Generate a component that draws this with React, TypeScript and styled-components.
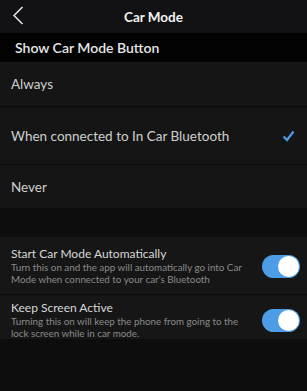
import { createGlobalStyle } from 'styled-components'
import styled from 'styled-components'

const GlobalStyle = createGlobalStyle`
  html, body {
    margin: 0;
    padding: 0;
    background: #0d0d0e;
  }
  body {
    font-family: Lato, 'Noto Sans', sans-serif;
    -webkit-font-smoothing: antialiased;
  }
`

const options = ['Always', 'When connected to In Car Bluetooth', 'Never']
const selected = 1

const toggles = [
  {
    title: 'Start Car Mode Automatically',
    text: 'Turn this on and the app will automatically go into Car Mode when connected to your car\u2019s Bluetooth',
    top: 10,
    bottom: 9,
  },
  {
    title: 'Keep Screen Active',
    text: 'Turning this on will keep the phone from going to the lock screen while in car mode.',
    top: 6,
    bottom: 0,
  },
]

const App = () => {
  return (
    <Screen>
      <GlobalStyle />
      <Header>
        <BackButton type='button' aria-label='Back'>
          <svg width='12' height='19' viewBox='0 0 12 19' fill='none'>
            <path d='M10.5 1L2 9.5L10.5 18' stroke='#e8e8e8' strokeWidth='1.5' />
          </svg>
        </BackButton>
        <Title>Car Mode</Title>
      </Header>
      <SectionTitle>Show Car Mode Button</SectionTitle>
      <OptionList>
        {options.map((label, i) => (
          <Option key={label} $tall={i === 1}>
            <span>{label}</span>
            {i === selected && (
              <svg width='13' height='12' viewBox='0 0 13 12' fill='none'>
                <path d='M1.5 6.5L5 10L11.5 1.5' stroke='#4d9be0' strokeWidth='2.2' />
              </svg>
            )}
          </Option>
        ))}
      </OptionList>
      <Gap />
      <ToggleList>
        {toggles.map((t) => (
          <ToggleRow key={t.title} $top={t.top} $bottom={t.bottom}>
            <ToggleText>
              <ToggleTitle>{t.title}</ToggleTitle>
              <ToggleDesc>{t.text}</ToggleDesc>
            </ToggleText>
            <Switch>
              <Knob />
            </Switch>
          </ToggleRow>
        ))}
      </ToggleList>
    </Screen>
  )
}

export default App

const Screen = styled.div`
  width: 307px;
  height: 391px;
  overflow: hidden;
  background: #0d0d0e;
  color: #d6d6d6;
`

const Header = styled.div`
  position: relative;
  height: 33px;
  display: flex;
  align-items: center;
  justify-content: center;
  background: #121215;
`

const BackButton = styled.button`
  position: absolute;
  left: 12px;
  top: 6px;
  padding: 0;
  border: none;
  background: none;
  display: flex;
`

const Title = styled.h1`
  margin: 0;
  font-size: 13.5px;
  font-weight: 700;
  color: #f2f2f2;
`

const SectionTitle = styled.div`
  height: 29px;
  display: flex;
  align-items: center;
  padding-left: 15px;
  background: #030303;
  font-size: 14px;
  font-weight: 600;
  color: #e6e6e6;
`

const OptionList = styled.div`
  background: #151515;
`

const Option = styled.div<{ $tall: boolean }>`
  height: ${(p) => (p.$tall ? 58 : 44)}px;
  display: flex;
  align-items: center;
  justify-content: space-between;
  padding: 0 12px 0 11px;
  font-size: 13.5px;
  color: #cfcfcf;
  border-top: 1px solid #0b0b0b;
  box-sizing: border-box;

  &:first-child {
    border-top: none;
  }
`

const Gap = styled.div`
  height: 29px;
  background: #0d0d0e;
`

const ToggleList = styled.div`
  background: #161616;
`

const ToggleRow = styled.div<{ $top: number; $bottom: number }>`
  display: flex;
  align-items: center;
  gap: 14px;
  padding: ${(p) => p.$top}px 7px ${(p) => p.$bottom}px 11px;
  border-top: 1px solid #0c0c0c;

  &:first-child {
    border-top: none;
  }
`

const ToggleText = styled.div`
  flex: 1;
`

const ToggleTitle = styled.div`
  font-size: 12px;
  line-height: 14px;
  color: #d8d8d8;
`

const ToggleDesc = styled.div`
  font-size: 9.8px;
  line-height: 12px;
  color: #8a8a8a;
`

const Switch = styled.div`
  width: 38px;
  height: 23px;
  border-radius: 12px;
  background: #4c9de6;
  display: flex;
  align-items: center;
  justify-content: flex-end;
  padding: 0 1px;
  box-sizing: border-box;
  flex-shrink: 0;
`

const Knob = styled.div`
  width: 21px;
  height: 21px;
  border-radius: 50%;
  background: #ffffff;
`
